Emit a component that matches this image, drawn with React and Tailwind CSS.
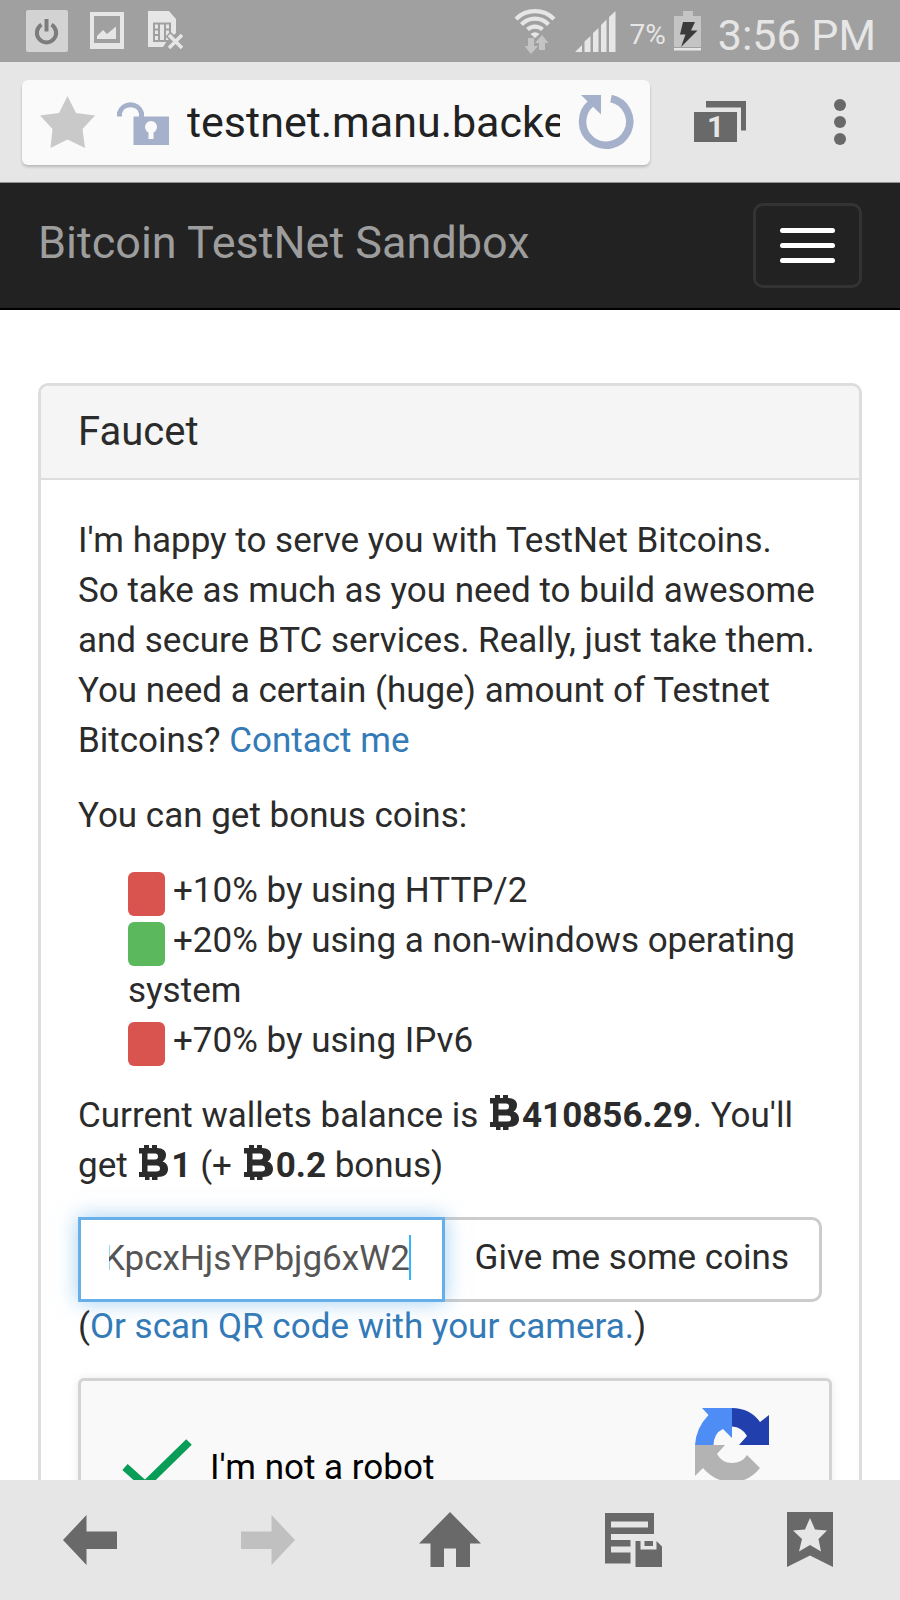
import { useEffect, useRef, useState } from 'react';

const bonuses = [
    { label: '+10% by using HTTP/2', active: false },
    { label: '+20% by using a non-windows operating system', active: true },
    { label: '+70% by using IPv6', active: false },
];

/* android status bar */
const StatusBar = () => (
    <div className="flex h-[62px] shrink-0 items-center justify-between bg-[#a0a0a0] pl-[26px] pr-6 text-[#e6e6e6]">
        <div className="flex items-center gap-[22px]">
            <svg width="42" height="42" viewBox="0 0 42 42">
                <rect width="42" height="42" rx="2" fill="#d3d3d3" />
                <path d="M15.5 14.6A9.6 9.6 0 1 0 25.500 14.600" fill="none" stroke="#7c7c7c" strokeWidth="4" />
                <path d="M20.500 9v12.500" stroke="#7c7c7c" strokeWidth="4" />
            </svg>
            <svg width="36" height="38" viewBox="2 0 36 38">
                <path fillRule="evenodd" fill="currentColor" d="M2 0H36V37H2ZM6 4V31H32V4Z" />
                <path fill="currentColor" d="M9 27V24L15 18L19 22L28 14.500V27Z" />
            </svg>
            <svg width="38" height="40" viewBox="0 0 38 40">
                <path fill="currentColor" d="M0 0H21L28 8V22L19 30L15 36H0Z" />
                <path fill="none" stroke="#a0a0a0" strokeWidth="2" d="M6 12.500H22V30H6ZM11 12V30M17 12V30M6 18.500H11M6 24H11M17 18.500H22" />
                <path stroke="#a0a0a0" strokeWidth="7" d="M20 23L35 38M35 23L20 38" />
                <path stroke="currentColor" strokeWidth="3.500" d="M21 24L34 37M34 24L21 37" />
            </svg>
        </div>
        <div className="flex items-center">
            <svg width="42" height="46" viewBox="0 0 42 46" className="mr-[19px]">
                <g fill="none" stroke="currentColor" strokeWidth="4.200">
                    <path d="M2 11A27 27 0 0 1 40 11" />
                    <path d="M7.500 16.500A18.500 18.500 0 0 1 34.500 16.500" />
                    <path d="M13.500 21.500A11 11 0 0 1 28.500 21.500" />
                </g>
                <path fill="currentColor" d="M16.500 26Q21 22.500 25.500 26L21 30Z" />
                <path fill="#c4c4c4" d="M14 30h6v8h4l-7 8l-6.500 -8h3.500ZM28 27l6.500 8h-3.500v7h-6v-7h-4Z" />
            </svg>
            <svg width="41" height="41" viewBox="0 0 41 41" className="mr-[14px]">
                <path fill="currentColor" d="M0 41L7 34V41ZM9.500 41V30.500L15.500 25V41ZM18 41V22L23.500 17V41ZM26 41V14L31.500 8.500V41ZM34 41V6L40.500 0V41Z" />
            </svg>
            <span className="mr-2 pt-2 text-[28px]">7%</span>
            <svg width="28" height="40" viewBox="0 0 28 40" className="mr-4">
                <path fill="#c4c4c4" d="M9 0H19V5H27V36H0V5H9Z" />
                <path fill="currentColor" d="M0 37H27V39.500H0Z" />
                <path fill="#3a3a3a" d="M9 11H21L17 19.500H23.500L7 36L11.500 23.500H6Z" />
            </svg>
            <span className="pt-2 text-[43px]">3:56 PM</span>
        </div>
    </div>
);

/* browser address bar */
const AddressBar = () => (
    <div className="flex h-[121px] shrink-0 items-center border-b border-[#8f9290] bg-[#e6e6e6] pl-[22px] pr-[54px]">
        <div className="flex h-[85px] min-w-0 flex-1 items-center rounded-md bg-[#fafafa] pl-[18px] pr-4 shadow-[0_2px_3px_rgba(0,0,0,0.2)]">
            <button aria-label="Bookmark" className="shrink-0">
                <svg width="55" height="52" viewBox="0 0 55 52">
                    <path fill="#c9c9c9" d="M27.500 0L36 17L55 19.500L42.500 33L45 52L27.500 43.500L10.500 52L12.500 33L0 19.500L19 17Z" />
                </svg>
            </button>
            <svg width="52" height="46" viewBox="0 0 52 46" className="ml-[22px] shrink-0 text-[#a5b1ca]">
                <path fill="none" stroke="currentColor" strokeWidth="5" d="M2.500 17.500V14A11.500 11.500 0 0 1 24.500 14V18" />
                <path fill="currentColor" d="M16.500 17.500H52V46H16.500Z" />
                <circle cx="34" cy="28" r="6" fill="#fafafa" />
                <path fill="#fafafa" d="M31.500 30H36.500V40H31.500Z" />
            </svg>
            <input
                aria-label="Address"
                defaultValue="testnet.manu.backend"
                className="ml-[18px] h-[60px] min-w-0 flex-1 bg-transparent text-[43px] text-[#222] outline-none"
            />
            <button aria-label="Reload" className="ml-[18px] shrink-0">
                <svg width="56" height="56" viewBox="0 0 56 56" className="text-[#a5b1ca]">
                    <path fill="none" stroke="currentColor" strokeWidth="7.500" d="M33 4.500A23.600 23.600 0 1 1 13 9.500" />
                    <path fill="currentColor" d="M3 1H23V20.500Z" />
                </svg>
            </button>
        </div>
        <button aria-label="Tabs" className="ml-11">
            <svg width="52" height="42" viewBox="0 0 52 42">
                <path fill="#696969" d="M12 0H52V29.500H47V6.500H12ZM0 11H43V41H0Z" />
                <text x="21.500" y="36" textAnchor="middle" fontSize="30" fontWeight="700" fill="#e6e6e6">1</text>
            </svg>
        </button>
        <button aria-label="More" className="ml-[88px]">
            <svg width="12" height="46" viewBox="0 0 12 46" fill="#696969">
                <circle cx="6" cy="6" r="6" />
                <circle cx="6" cy="23" r="6" />
                <circle cx="6" cy="40" r="6" />
            </svg>
        </button>
    </div>
);

const Navbar = () => (
    <nav className="flex h-[127px] items-center justify-between border-b-2 border-black bg-[#222] px-[38px]">
        <a href="#" className="pb-[6px] text-[45px] leading-[50px] text-[#9d9d9d]">Bitcoin TestNet Sandbox</a>
        <button
            aria-label="Toggle navigation"
            className="flex flex-col gap-[10px] rounded-[10px] border-[3px] border-[#333] px-6 py-[22px]"
        >
            <span className="h-[5px] w-[55px] rounded-sm bg-white" />
            <span className="h-[5px] w-[55px] rounded-sm bg-white" />
            <span className="h-[5px] w-[55px] rounded-sm bg-white" />
        </button>
    </nav>
);

const BitcoinIcon = () => (
    <svg width="30" height="35" viewBox="0 0 30 35" className="ml-[3px] mr-[2px] inline-block align-[-3px]">
        <path
            fill="currentColor"
            fillRule="evenodd"
            d="M0 3H5V0H10V3H13V0H18V3C24 3 27 6 27 10C27 13 25.500 15.500 23.500 16.500C27 17.500 29 20 29 24C29 29 25.500 32 18.500 32V35H13V32H10.500V35H6V32H0V27H3V8.500H0ZM8.500 8.500V14.500H16Q19 14.500 19 11.500Q19 8.500 16 8.500ZM8.500 20.500V26.500H17.500Q21 26.500 21 23.500Q21 20.500 17.500 20.500Z"
        />
    </svg>
);

const Amount = ({ value }) => (
    <b className="font-bold">
        <BitcoinIcon />
        {value}
    </b>
);

/* recaptcha box */
const Captcha = () => {
    const [checked, setChecked] = useState(true);

    return (
        <div className="-mr-[10px] mt-[26px] flex h-[180px] justify-between rounded-md border-[3px] border-[#d3d3d3] bg-[#f9f9f9] shadow-[0_0_10px_rgba(0,0,0,0.08)]">
            <label className="flex items-center text-black">
                <input
                    type="checkbox"
                    checked={checked}
                    onChange={() => setChecked(!checked)}
                    className="peer sr-only"
                />
                <svg width="72" height="60" viewBox="0 0 72 60" className="invisible ml-[41px] mr-4 peer-checked:visible">
                    <path fill="none" stroke="#0a9d58" strokeWidth="8" d="M3 29L23 47L67 4" />
                </svg>
                I'm not a robot
            </label>
            <svg width="76" height="76" viewBox="0 0 76 76" className="mr-[58px] mt-[27px]">
                <path fill="#4e8df5" d="M7 0H37V30L28 21Q19 25 18.500 37H0Q1 20 13.500 7Z" />
                <path fill="#2140ad" d="M37 0Q55 0 65 14L74 7V37H44L52 28Q47 19 37 18.500Z" />
                <path fill="#b3b3b3" d="M0 37H30L22 46Q27 55 37 55Q47 55 52 47L65 60Q54 74 37 74Q20 74 8 60L0 68Z" />
            </svg>
        </div>
    );
};

const Faucet = () => {
    const [address, setAddress] = useState('KpcxHjsYPbjg6xW2');
    const inputRef = useRef(null);

    /* keep the end of the address in view */
    useEffect(() => {
        inputRef.current.scrollLeft = inputRef.current.scrollWidth;
    }, [address]);

    return (
        <section className="mx-[38px] mt-[73px] rounded-[10px] border-[3px] border-[#ddd] bg-white">
            <h3 className="rounded-t-lg border-b-2 border-[#ddd] bg-[#f5f5f5] px-[37px] py-6 text-[40px] leading-[44px]">
                Faucet
            </h3>
            <div className="px-[37px] py-9">
                <p>
                    I'm happy to serve you with TestNet Bitcoins.
                    <br />
                    So take as much as you need to build awesome and secure BTC services. Really, just take them.
                    You need a certain (huge) amount of Testnet Bitcoins?{' '}
                    <a href="#" className="text-[#337ab7]">Contact me</a>
                </p>
                <p className="mt-[25px]">You can get bonus coins:</p>
                <ul className="mt-[25px] pl-[50px]">
                    {bonuses.map((bonus) => (
                        <li key={bonus.label}>
                            <span
                                className={`mr-2 inline-block h-11 w-[37px] rounded-md align-[-14px] ${bonus.active ? 'bg-[#5cb85c]' : 'bg-[#d9534f]'}`}
                            />
                            {bonus.label}
                        </li>
                    ))}
                </ul>
                <p className="mt-[25px]">
                    Current wallets balance is <Amount value="410856.29" />. You'll get <Amount value="1" /> (+{' '}
                    <Amount value="0.2" /> bonus)
                </p>
                <form className="mt-[26px] flex" onSubmit={(e) => e.preventDefault()}>
                    <div className="relative z-10 min-w-0 flex-1">
                        <input
                            ref={inputRef}
                            aria-label="Wallet address"
                            value={address}
                            onChange={(e) => setAddress(e.target.value)}
                            className="block h-[85px] w-full border-[3px] border-[#66afe9] bg-white pb-[3px] pl-7 pr-8 text-[#555] caret-transparent shadow-[0_0_20px_rgba(102,175,233,0.6)] outline-none"
                        />
                        <span className="absolute right-[34px] top-[18px] h-[45px] w-[2px] bg-[#33b5ff]" />
                    </div>
                    <button className="-ml-[3px] h-[85px] whitespace-nowrap rounded-r-[10px] border-[3px] border-[#ccc] bg-white px-[30px] pb-[3px]">
                        Give me some coins
                    </button>
                </form>
                <p>(<a href="#" className="text-[#337ab7]">Or scan QR code with your camera.</a>)</p>
                <Captcha />
            </div>
        </section>
    );
};

/* browser toolbar */
const Toolbar = () => (
    <div className="flex h-[120px] shrink-0 items-center justify-between bg-[#e6e6e6] pl-[63px] pr-[67px] text-[#696969]">
        <button aria-label="Back">
            <svg width="54" height="52" viewBox="0 0 54 52">
                <path fill="currentColor" d="M0 26L23.500 1V17.500H54V35H23.500V51Z" />
            </svg>
        </button>
        <button aria-label="Forward" className="text-[#c0c0c0]">
            <svg width="54" height="52" viewBox="0 0 54 52">
                <path fill="currentColor" d="M54 26L30.500 1V17.500H0V35H30.500V51Z" />
            </svg>
        </button>
        <button aria-label="Home">
            <svg width="62" height="56" viewBox="0 0 62 56">
                <path fill="currentColor" d="M31 0L62 31.500H51V55H37V36.500H25V55H11.500V31.500H0Z" />
            </svg>
        </button>
        <button aria-label="Saved pages">
            <svg width="58" height="54" viewBox="0 0 58 54">
                <path fillRule="evenodd" fill="currentColor" d="M0 0H49V21H6V27H25.500V33.500H6V39.500H25.500V50.500H0ZM6 8.500V14.500H43V8.500Z" />
                <path fillRule="evenodd" fill="currentColor" d="M30.500 28H35.500V36.500H51.500V28L57 33.500V54H30.500ZM39.500 28H48V33H39.500Z" />
            </svg>
        </button>
        <button aria-label="Bookmarks">
            <svg width="46" height="56" viewBox="0 0 46 56">
                <path fill="currentColor" d="M0 0H46V55L23 43.500L0 55Z" />
                <path fill="#e6e6e6" d="M23 6L28 17.500L40 18.500L31.500 27L34 39.500L23 33L12 39.500L15 27L6 18.500L18 17.500Z" />
            </svg>
        </button>
    </div>
);

const App = () => (
    <div className="flex h-screen flex-col bg-white font-['Roboto',sans-serif] text-[35px] leading-[50px] text-[#2b2b2b]">
        <StatusBar />
        <AddressBar />
        <main className="min-h-0 flex-1 overflow-y-auto [scrollbar-width:none]">
            <Navbar />
            <Faucet />
        </main>
        <Toolbar />
    </div>
);

export default App;
